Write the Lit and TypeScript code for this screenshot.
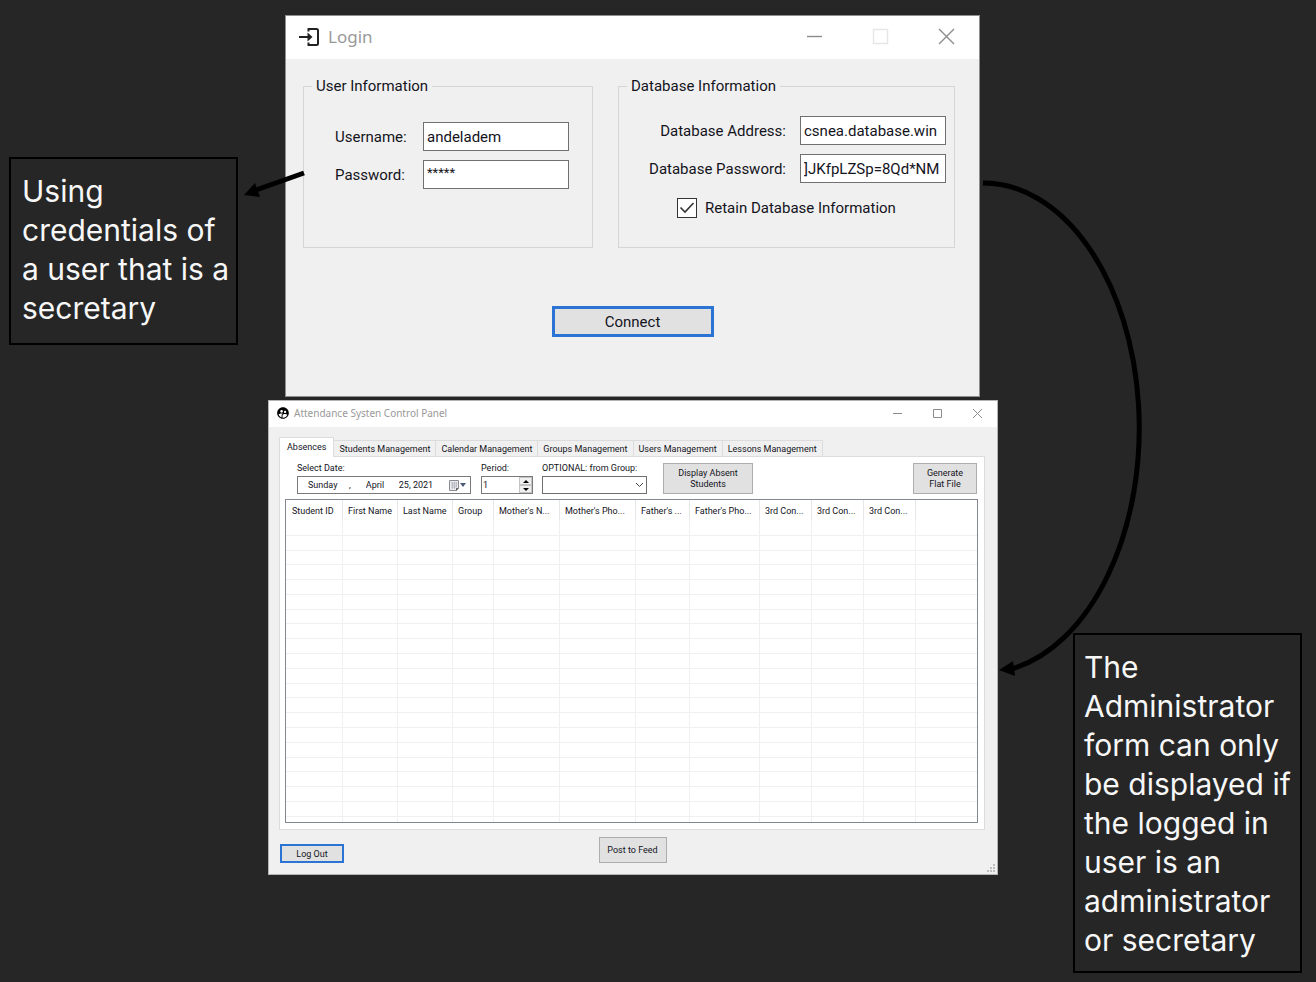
import { LitElement, html, css, svg, nothing } from "lit";
import { customElement, property } from "lit/decorators.js";

interface Column {
  title: string;
  width: number;
}

const TABS = [
  "Absences",
  "Students Management",
  "Calendar Management",
  "Groups Management",
  "Users Management",
  "Lessons Management",
];

const COLUMNS: Column[] = [
  { title: "Student ID", width: 57 },
  { title: "First Name", width: 55 },
  { title: "Last Name", width: 55 },
  { title: "Group", width: 41 },
  { title: "Mother's N...", width: 66 },
  { title: "Mother's Pho...", width: 76 },
  { title: "Father's ...", width: 54 },
  { title: "Father's Pho...", width: 70 },
  { title: "3rd Con...", width: 52 },
  { title: "3rd Con...", width: 52 },
  { title: "3rd Con...", width: 52 },
  { title: "", width: 61 },
];

const EMPTY_ROWS = Array.from({ length: 21 });

@customElement("window-controls")
export class WindowControls extends LitElement {
  @property({ type: Boolean }) large = false;

  static styles = css`
    :host {
      display: flex;
      align-items: center;
      gap: 24px;
    }
    :host([large]) {
      gap: 48px;
    }
    button {
      display: flex;
      align-items: center;
      justify-content: center;
      width: 16px;
      height: 16px;
      padding: 0;
      border: 0;
      background: none;
    }
    :host([large]) button {
      width: 18px;
      height: 18px;
    }
    svg {
      width: 9px;
      height: 9px;
      flex: none;
      fill: none;
      stroke: #8c8c8c;
      overflow: visible;
    }
    :host([large]) svg {
      width: 15px;
      height: 15px;
      stroke-width: 1.4;
    }
    :host([large]) .faint {
      stroke: #e6e6e6;
    }
  `;

  render() {
    const n = this.large ? 15 : 9;
    const edge = n - 0.5;
    const mid = Math.floor(n / 2) + 0.5;
    return html`
      <button aria-label="Minimize">
        <svg viewBox="0 0 ${n} ${n}"><path d="M0 ${mid}H${n}" /></svg>
      </button>
      <button aria-label="Maximize">
        <svg class="faint" viewBox="0 0 ${n} ${n}">
          <path d="M.5 .5H${edge}V${edge}H.5Z" />
        </svg>
      </button>
      <button aria-label="Close">
        <svg viewBox="0 0 ${n} ${n}"><path d="M0 0L${n} ${n}M${n} 0L0 ${n}" /></svg>
      </button>
    `;
  }
}

@customElement("login-window")
export class LoginWindow extends LitElement {
  static styles = css`
    :host {
      display: block;
      box-sizing: border-box;
      border: 1px solid #8f8f8f;
      background: #f0f0f0;
      color: #14141c;
      font: 15px/18px Roboto, "Liberation Sans", sans-serif;
    }
    * {
      box-sizing: border-box;
    }
    .titlebar {
      display: flex;
      align-items: center;
      height: 43px;
      padding: 0 24px 2px 12px;
      background: #fff;
    }
    .icon {
      width: 22px;
      height: 20px;
      margin-right: 8px;
    }
    h1 {
      flex: 1;
      margin: 0;
      color: #999;
      font: 17px/24px "Noto Sans", "Open Sans", sans-serif;
    }
    form {
      display: flex;
      flex-direction: column;
      padding: 18px 0 59px;
    }
    .groups {
      display: grid;
      grid-template-columns: 290fr 337fr;
      gap: 25px;
      padding: 0 24px 0 17px;
    }
    fieldset {
      min-width: 0;
      min-height: 171px;
      margin: 0;
      padding: 21px 8px 0 0;
      border: 1px solid #d5d5d5;
    }
    .user {
      padding-top: 27px;
      padding-right: 23px;
    }
    legend {
      margin-left: 8px;
      padding: 0 4px;
    }
    .field {
      display: flex;
      align-items: center;
      justify-content: flex-end;
      margin-bottom: 9px;
    }
    .field label {
      margin-right: 14px;
    }
    .user label {
      width: 74px;
    }
    .field input {
      width: 146px;
      height: 29px;
      padding: 0 3px;
      border: 1px solid #707070;
      border-radius: 0;
      background: #fff;
      color: inherit;
      font: inherit;
    }
    .field .masked {
      padding-bottom: 4px;
      font-size: 13px;
    }
    .retain {
      display: flex;
      align-items: center;
      margin: 15px 0 0 58px;
    }
    .retain label {
      margin-left: 8px;
    }
    .tick {
      display: grid;
      width: 20px;
      height: 20px;
    }
    .tick input,
    .tick svg {
      grid-area: 1 / 1;
      width: 20px;
      height: 20px;
      margin: 0;
    }
    .tick input {
      appearance: none;
      border: 1px solid #333;
      background: #fff;
    }
    .tick svg {
      pointer-events: none;
      fill: none;
      stroke: #333;
      stroke-width: 1.6;
    }
    .connect {
      align-self: center;
      width: 162px;
      height: 31px;
      margin-top: 58px;
      padding: 0;
      border: 3px solid #2b74d4;
      background: #e1e1e1;
      color: inherit;
      font: inherit;
    }
  `;

  render() {
    return html`
      <header class="titlebar">
        <svg class="icon" viewBox="0 0 22 20" fill="none" stroke="#222" stroke-width="2">
          <path d="M10.500 4.500V2H18.500Q20 2 20 3.500V16.500Q20 18 18.500 18H10.500V15.500" />
          <path d="M1 10H13" />
          <path d="M9.500 5.500L14.500 10L9.500 14.500Z" fill="#222" stroke="none" />
        </svg>
        <h1>Login</h1>
        <window-controls large></window-controls>
      </header>
      <form @submit=${(e: Event) => e.preventDefault()}>
        <div class="groups">
          <fieldset class="user">
            <legend>User Information</legend>
            <div class="field">
              <label for="username">Username:</label>
              <input id="username" type="text" value="andeladem" />
            </div>
            <div class="field">
              <label for="password">Password:</label>
              <input id="password" class="masked" type="text" autocomplete="off" value="*****" />
            </div>
          </fieldset>
          <fieldset>
            <legend>Database Information</legend>
            <div class="field">
              <label for="address">Database Address:</label>
              <input id="address" type="text" value="csnea.database.win" />
            </div>
            <div class="field">
              <label for="dbpass">Database Password:</label>
              <input id="dbpass" type="text" value="]JKfpLZSp=8Qd*NM" />
            </div>
            <div class="retain">
              <span class="tick">
                <input id="retain" type="checkbox" checked />
                <svg viewBox="0 0 20 20"><path d="M3.500 9.500L8 14L16.500 5" /></svg>
              </span>
              <label for="retain">Retain Database Information</label>
            </div>
          </fieldset>
        </div>
        <button class="connect">Connect</button>
      </form>
    `;
  }
}

@customElement("attendance-window")
export class AttendanceWindow extends LitElement {
  static styles = css`
    :host {
      display: block;
      box-sizing: border-box;
      border: 1px solid #b4b4b4;
      background: #f0f0f0;
      color: #14141c;
      font: 9px/12px Roboto, "Liberation Sans", sans-serif;
    }
    * {
      box-sizing: border-box;
    }
    button,
    input,
    select {
      border-radius: 0;
      color: inherit;
      font: inherit;
    }
    .titlebar {
      display: flex;
      align-items: center;
      height: 26px;
      padding: 0 12px 2px 7px;
      background: #fff;
    }
    .icon {
      width: 14px;
      height: 14px;
      margin-right: 4px;
    }
    h1 {
      flex: 1;
      margin: 0;
      color: #999;
      font: 10px/14px "Noto Sans", "Open Sans", sans-serif;
    }
    .body {
      padding: 10px 12px 0 10px;
    }
    .tabs {
      display: flex;
      align-items: flex-end;
    }
    .tab {
      height: 16px;
      padding: 0 5px;
      border: 1px solid #dcdcdc;
      border-width: 1px 1px 0 0;
      background: #f0f0f0;
      white-space: nowrap;
    }
    .tab.active {
      height: 20px;
      margin-bottom: -1px;
      padding: 0 7px 2px;
      border-left-width: 1px;
      background: #fff;
      z-index: 1;
    }
    .panel {
      padding: 4px 6px 6px 5px;
      border: 1px solid #dcdcdc;
      background: #fff;
    }
    .toolbar {
      display: flex;
      align-items: flex-end;
      height: 33px;
      padding: 0 1px 0 12px;
    }
    .control {
      display: flex;
      flex-direction: column;
      gap: 2px;
    }
    .control > label,
    .caption {
      white-space: nowrap;
    }
    .date {
      width: 174px;
      margin-right: 10px;
    }
    .period {
      width: 52px;
      margin-right: 9px;
    }
    .group {
      width: 105px;
      margin-right: 16px;
    }
    .box {
      display: flex;
      align-items: center;
      height: 18px;
      border: 1px solid #7a7a7a;
      background: #fff;
    }
    .box input {
      min-width: 0;
      height: 14px;
      padding: 0;
      border: 0;
      background: none;
    }
    .weekday {
      width: 34px;
      margin: 0 7px 0 10px;
    }
    .month {
      width: 22px;
      margin: 0 11px 0 15px;
    }
    .day {
      width: 44px;
    }
    .pick {
      display: flex;
      align-items: center;
      gap: 1px;
      margin-left: auto;
      padding: 0 4px;
      border: 0;
      background: none;
    }
    .pick svg {
      flex: none;
    }
    .calendar {
      width: 10px;
      height: 11px;
    }
    .caret {
      width: 6px;
      height: 4px;
    }
    .period input {
      flex: 1;
      padding-left: 1px;
      appearance: textfield;
    }
    .period input::-webkit-inner-spin-button {
      display: none;
    }
    .spinner {
      display: flex;
      flex-direction: column;
      width: 13px;
    }
    .spinner button {
      display: flex;
      align-items: center;
      justify-content: center;
      height: 8px;
      padding: 0;
      border: 1px solid #c4c4c4;
      background: #f0f0f0;
    }
    .spinner svg {
      width: 6px;
      height: 3px;
    }
    .combo {
      display: grid;
    }
    .combo select,
    .combo svg {
      grid-area: 1 / 1;
    }
    .combo select {
      height: 18px;
      padding: 0 18px 0 2px;
      border: 1px solid #6f6f6f;
      appearance: none;
      background: #fff;
    }
    .combo svg {
      align-self: center;
      justify-self: end;
      width: 9px;
      height: 6px;
      margin-right: 3px;
      pointer-events: none;
    }
    .push {
      padding: 0;
      border: 1px solid #adadad;
      background: #e1e1e1;
      line-height: 11px;
    }
    .display {
      width: 90px;
      height: 31px;
    }
    .generate {
      width: 64px;
      height: 31px;
      margin-left: auto;
    }
    .list {
      height: 324px;
      margin-top: 5px;
      border: 1px solid #828790;
      overflow: hidden;
    }
    table {
      width: 100%;
      height: 322px;
      border-collapse: separate;
      border-spacing: 0;
      table-layout: fixed;
    }
    th {
      height: 21px;
      padding: 0 0 0 5px;
      border-right: 1px solid #e8e8e8;
      font-weight: 400;
      text-align: left;
      white-space: nowrap;
    }
    th:first-child {
      padding-left: 6px;
    }
    td {
      height: 14px;
      padding: 0;
      border-right: 1px solid #f0f0f0;
      border-bottom: 1px solid #f0f0f0;
    }
    th:last-child,
    td:last-child {
      border-right: 0;
    }
    tr.stub td {
      height: 5px;
      border-bottom: 0;
    }
    .footer {
      display: grid;
      grid-template-columns: 1fr auto 1fr;
      align-items: end;
      height: 44px;
      padding: 7px 0 11px 1px;
    }
    .logout {
      width: 64px;
      height: 19px;
      padding: 0;
      border: 2px solid #2b74d4;
      background: #e1e1e1;
    }
    .post {
      align-self: start;
      width: 68px;
      height: 26px;
    }
    .grip {
      position: absolute;
      right: 2px;
      bottom: 2px;
      width: 8px;
      height: 8px;
      fill: #bfbfbf;
    }
  `;

  private renderTab(name: string, index: number) {
    return html`<button
      class="tab ${index === 0 ? "active" : ""}"
      role="tab"
      aria-selected=${index === 0 ? "true" : "false"}
    >${name}</button>`;
  }

  render() {
    return html`
      <header class="titlebar">
        <svg class="icon" viewBox="0 0 24 24">
          <path
            d="M11.990 2c-5.520 0-10 4.480-10 10s4.480 10 10 10 10-4.480 10-10-4.480-10-10-10zm3.610 6.340c1.070 0 1.930.86 1.930 1.930 0 1.070-.86 1.930-1.930 1.930-1.070 0-1.930-.86-1.930-1.930-.01-1.070.86-1.930 1.930-1.930zm-6-1.580c1.300 0 2.360 1.060 2.360 2.360 0 1.300-1.060 2.360-2.360 2.360s-2.360-1.060-2.360-2.360c0-1.310 1.050-2.360 2.360-2.360zm0 9.130v3.750c-2.400-.75-4.300-2.600-5.140-4.960 1.050-1.120 3.670-1.690 5.140-1.690.53 0 1.200.08 1.900.22-1.640.87-1.900 2.020-1.900 2.680zM11.990 20c-.27 0-.53-.01-.79-.04v-4.070c0-1.420 2.940-2.130 4.400-2.130 1.070 0 2.920.39 3.840 1.150-1.170 2.970-4.060 5.090-7.450 5.090z"
          />
        </svg>
        <h1>Attendance Systen Control Panel</h1>
        <window-controls></window-controls>
      </header>
      <div class="body">
        <div class="tabs" role="tablist">${TABS.map((t, i) => this.renderTab(t, i))}</div>
        <section class="panel" role="tabpanel" aria-label="Absences">
          <div class="toolbar">
            <div class="control date" role="group" aria-labelledby="date-caption">
              <span class="caption" id="date-caption">Select Date:</span>
              <div class="box">
                <input class="weekday" aria-label="Weekday" value="Sunday" />
                <span>,</span>
                <input class="month" aria-label="Month" value="April" />
                <input class="day" aria-label="Day and year" value="25, 2021" />
                <button class="pick" aria-label="Open calendar">
                  <svg class="calendar" viewBox="0 0 10 11">
                    <path d="M.5 .5H9.500V8L7.500 10.500H.5Z" fill="#e9e9ee" stroke="#8b8b93" />
                    <path d="M2 3H8M2 5H8M2 7H8M3.500 2V9M5.500 2V9M7.500 2V7" stroke="#a9a9b4" stroke-width=".6" />
                    <path d="M7 8H10L7 11Z" fill="#666" />
                  </svg>
                  <svg class="caret" viewBox="0 0 6 4"><path d="M0 0H6L3 4Z" fill="#4b5a78" /></svg>
                </button>
              </div>
            </div>
            <div class="control period">
              <label for="period">Period:</label>
              <div class="box">
                <input id="period" type="number" value="1" />
                <span class="spinner">
                  <button aria-label="Increase">
                    <svg viewBox="0 0 6 3"><path d="M0 3H6L3 0Z" /></svg>
                  </button>
                  <button aria-label="Decrease">
                    <svg viewBox="0 0 6 3"><path d="M0 0H6L3 3Z" /></svg>
                  </button>
                </span>
              </div>
            </div>
            <div class="control group">
              <label for="group">OPTIONAL: from Group:</label>
              <div class="combo">
                <select id="group"><option></option></select>
                <svg viewBox="0 0 9 6" fill="none" stroke="#444">
                  <path d="M1 1L4.500 4.500L8 1" />
                </svg>
              </div>
            </div>
            <button class="push display">Display Absent<br />Students</button>
            <button class="push generate">Generate<br />Flat File</button>
          </div>
          <div class="list">
            <table>
              <colgroup>
                ${COLUMNS.map((c) => html`<col style="width:${c.width}px" />`)}
              </colgroup>
              <thead>
                <tr>
                  ${COLUMNS.map((c) => html`<th scope="col">${c.title}</th>`)}
                </tr>
              </thead>
              <tbody>
                ${EMPTY_ROWS.map(
                  (_, i) => html`<tr class=${i === EMPTY_ROWS.length - 1 ? "stub" : nothing}>
                    ${COLUMNS.map(() => html`<td></td>`)}
                  </tr>`
                )}
              </tbody>
            </table>
          </div>
        </section>
        <footer class="footer">
          <button class="logout">Log Out</button>
          <button class="push post">Post to Feed</button>
        </footer>
      </div>
      <svg class="grip" viewBox="0 0 8 8" aria-hidden="true">
        ${[
          [6, 0],
          [3, 3],
          [6, 3],
          [0, 6],
          [3, 6],
          [6, 6],
        ].map(([x, y]) => svg`<rect x=${x} y=${y} width="2" height="2" />`)}
      </svg>
    `;
  }
}

@customElement("app-root")
export class AppRoot extends LitElement {
  static styles = css`
    :host {
      display: block;
      position: relative;
      min-height: 100vh;
      overflow: hidden;
      background: #262626;
    }
    .login {
      position: absolute;
      left: 285px;
      top: 15px;
      width: 695px;
    }
    .attendance {
      position: absolute;
      left: 268px;
      top: 400px;
      width: 730px;
    }
    .note {
      position: absolute;
      box-sizing: border-box;
      width: 229px;
      margin: 0;
      border: 2px solid #000;
      color: #f7f7f7;
      font: 30px/39px Inter, "Open Sans", sans-serif;
    }
    .secretary {
      left: 9px;
      top: 157px;
      padding: 13px 2px 15px 11px;
    }
    .administrator {
      left: 1073px;
      top: 633px;
      padding: 13px 2px 11px 9px;
    }
    .arrows {
      position: absolute;
      left: 0;
      top: 0;
      width: 1316px;
      height: 982px;
      pointer-events: none;
    }
  `;

  render() {
    return html`
      <login-window class="login"></login-window>
      <attendance-window class="attendance"></attendance-window>
      <p class="note secretary">Using<br />credentials of<br />a user that is a<br />secretary</p>
      <p class="note administrator">
        The<br />Administrator<br />form can only<br />be displayed if<br />the logged in<br />user is
        an<br />administrator<br />or secretary
      </p>
      <svg class="arrows" viewBox="0 0 1316 982" aria-hidden="true">
        <g fill="none" stroke="#000" stroke-width="5">
          <path d="M304 173L256 190" />
          <path d="M983 183A156 245 0 0 1 1013 668.500" />
        </g>
        <path d="M244 195L255 183L260 197Z" />
        <path d="M999 670L1013 661L1015 676Z" />
      </svg>
    `;
  }
}
